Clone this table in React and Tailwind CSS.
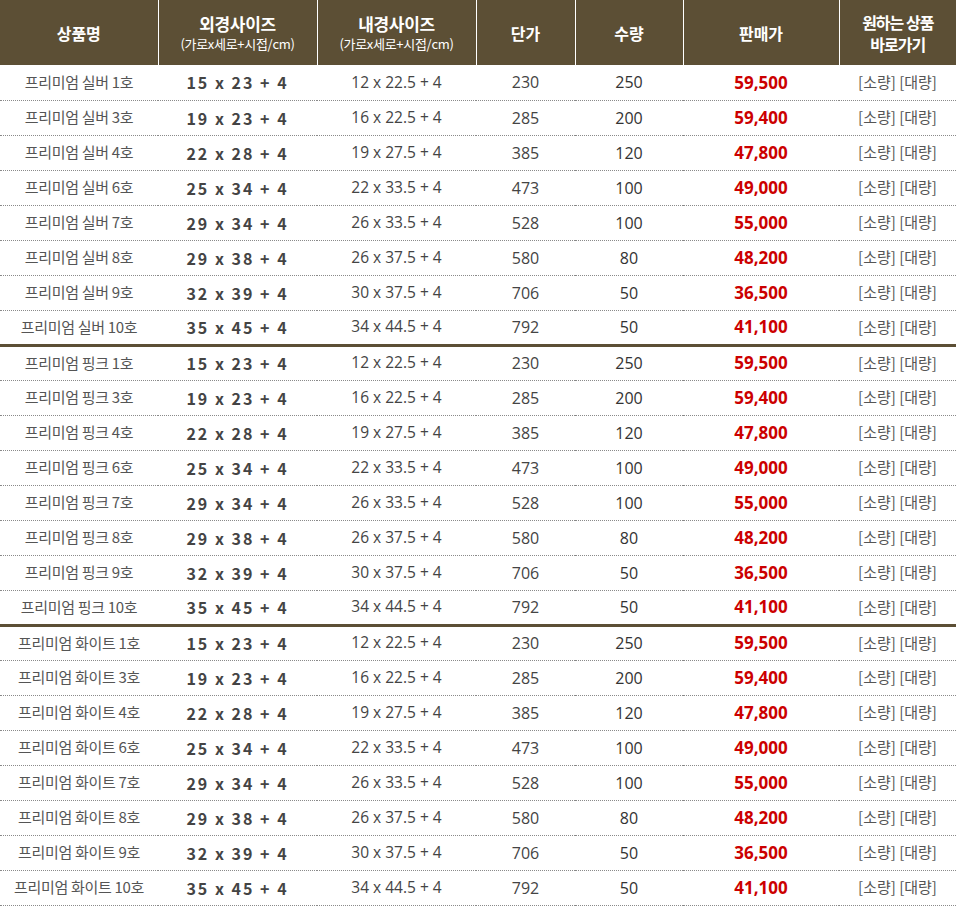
import React from "react";

const sizes = [
  { no: "1호", outer: "15 x 23 + 4", inner: "12 x 22.5 + 4", unit: "230", qty: "250", price: "59,500" },
  { no: "3호", outer: "19 x 23 + 4", inner: "16 x 22.5 + 4", unit: "285", qty: "200", price: "59,400" },
  { no: "4호", outer: "22 x 28 + 4", inner: "19 x 27.5 + 4", unit: "385", qty: "120", price: "47,800" },
  { no: "6호", outer: "25 x 34 + 4", inner: "22 x 33.5 + 4", unit: "473", qty: "100", price: "49,000" },
  { no: "7호", outer: "29 x 34 + 4", inner: "26 x 33.5 + 4", unit: "528", qty: "100", price: "55,000" },
  { no: "8호", outer: "29 x 38 + 4", inner: "26 x 37.5 + 4", unit: "580", qty: "80", price: "48,200" },
  { no: "9호", outer: "32 x 39 + 4", inner: "30 x 37.5 + 4", unit: "706", qty: "50", price: "36,500" },
  { no: "10호", outer: "35 x 45 + 4", inner: "34 x 44.5 + 4", unit: "792", qty: "50", price: "41,100" },
];

const groups = ["프리미엄 실버", "프리미엄 핑크", "프리미엄 화이트"];

const num = { fontFamily: '"Open Sans", "Noto Sans CJK KR", sans-serif' };

const App = () => {
  return (
    <div
      className="w-[956px] bg-white"
      style={{ fontFamily: '"Noto Sans CJK KR", "Noto Sans", sans-serif' }}
    >
      <table className="w-[956px] table-fixed border-collapse">
        <colgroup>
          <col className="w-[158px]" />
          <col className="w-[159px]" />
          <col className="w-[159px]" />
          <col className="w-[99px]" />
          <col className="w-[108px]" />
          <col className="w-[156px]" />
          <col className="w-[117px]" />
        </colgroup>
        <thead>
          <tr className="h-[65px] bg-[#5c4f35] text-white">
            <th className="border-r border-white text-[16px] font-bold">상품명</th>
            <th className="border-r border-white font-bold">
              <div className="text-[17px] leading-[22px] tracking-[-0.3px]">외경사이즈</div>
              <div className="text-[13px] leading-[18px] font-normal tracking-[-0.3px]">(가로x세로+시접/cm)</div>
            </th>
            <th className="border-r border-white font-bold">
              <div className="text-[17px] leading-[22px] tracking-[-0.3px]">내경사이즈</div>
              <div className="text-[13px] leading-[18px] font-normal tracking-[-0.3px]">(가로x세로+시접/cm)</div>
            </th>
            <th className="border-r border-white text-[16px] font-bold">단가</th>
            <th className="border-r border-white text-[16px] font-bold">수량</th>
            <th className="border-r border-white text-[16px] font-bold">판매가</th>
            <th className="text-[16px] font-bold leading-[22px] tracking-[-1px]">
              원하는 상품
              <br />
              바로가기
            </th>
          </tr>
        </thead>
        <tbody>
          {groups.map((g, gi) =>
            sizes.map((s, i) => {
              const last = i === sizes.length - 1 && gi < groups.length - 1;
              return (
                <tr
                  key={g + s.no}
                  className={
                    last
                      ? "h-[35px] border-b-[3px] border-solid border-[#5c4f35] text-center"
                      : "h-[35px] border-b border-dotted border-[#8a8a8a] text-center"
                  }
                >
                  <td className="text-[15px] text-[#555] tracking-[-0.3px] whitespace-nowrap">
                    {g} {s.no}
                  </td>
                  <td className="text-[16px] font-bold text-[#444] tracking-[2px] whitespace-nowrap">
                    {s.outer}
                  </td>
                  <td className="text-[15.5px] text-[#444] whitespace-nowrap" style={num}>
                    {s.inner}
                  </td>
                  <td className="text-[16px] text-[#444]" style={num}>
                    {s.unit}
                  </td>
                  <td className="text-[16px] text-[#333]" style={num}>
                    {s.qty}
                  </td>
                  <td className="text-[17px] font-bold text-[#cc0000]" style={num}>
                    {s.price}
                  </td>
                  <td className="text-[15px] text-[#555] whitespace-nowrap">[소량] [대량]</td>
                </tr>
              );
            })
          )}
        </tbody>
      </table>
    </div>
  );
};

export default App;
